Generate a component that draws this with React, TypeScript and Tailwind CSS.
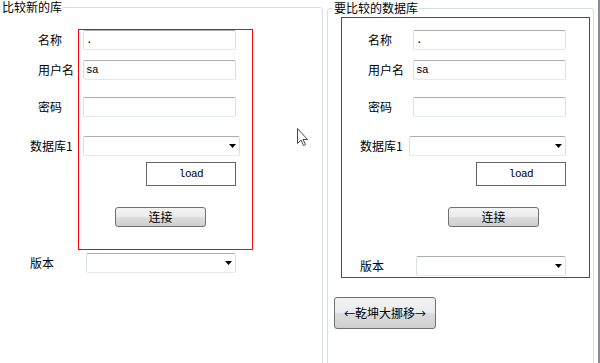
import React from "react";

const CJK = "font-[Noto_Sans_CJK_SC,sans-serif]";
const MONO = "font-[Liberation_Mono,monospace]";

function TextBox({ text = "", w = "w-[153px]" }: { text?: string; w?: string }) {
  return (
    <div
      className={`${w} h-[20px] shrink-0 bg-white border border-[#dbdfe6] border-t-[#abadb3] border-b-[#e3e9ef] rounded-[2px] pl-[2px] flex items-center text-[11px] tracking-[-0.5px] text-black ${MONO}`}
    >
      {text}
    </div>
  );
}

function ComboBox({ w = "w-[157px]" }: { w?: string }) {
  return (
    <div
      className={`${w} h-[20px] shrink-0 bg-white border border-[#dbdfe6] border-t-[#abadb3] border-b-[#e3e9ef] rounded-[2px] pr-[3px] flex items-center justify-end`}
    >
      <svg width="7" height="4" viewBox="0 0 7 4">
        <path d="M0 0H7L3.5 4Z" fill="#000" />
      </svg>
    </div>
  );
}

function LoadButton({ className = "" }: { className?: string }) {
  return (
    <div
      className={`w-[90px] h-[24px] bg-white border border-[#646464] flex items-center justify-center text-[11px] tracking-[-0.5px] text-black ${MONO} ${className}`}
    >
      load
    </div>
  );
}

function WinButton({ children, className = "" }: { children: React.ReactNode; className?: string }) {
  return (
    <div
      className={`border border-[#707070] rounded-[3px] bg-[linear-gradient(#f2f2f2_0%,#ebebeb_50%,#dddddd_50%,#cfcfcf_100%)] flex items-center justify-center text-[12px] text-black ${CJK} ${className}`}
    >
      {children}
    </div>
  );
}

function Label({ children, className = "" }: { children: React.ReactNode; className?: string }) {
  return <div className={`shrink-0 text-[12px] leading-[14px] text-black ${CJK} ${className}`}>{children}</div>;
}

export default function App() {
  return (
    <div className="relative w-[600px] h-[363px] overflow-hidden bg-white flex items-start">
      {/* Left group box */}
      <fieldset className="ml-[-4px] w-[327px] h-[420px] shrink-0 border border-[#d5dfe5] rounded-[3px] p-0 m-0">
        <legend className={`ml-[4px] px-[1px] text-[12px] leading-[14px] text-black ${CJK}`}>比较新的库</legend>
        <div className="flex mt-[15px]">
          <div className="w-[81px] shrink-0 pt-[1px] flex flex-col">
            <div className="h-[20px] flex items-center">
              <Label className="pl-[41px]">名称</Label>
            </div>
            <div className="h-[20px] mt-[10px] flex items-center">
              <Label className="pl-[41px]">用户名</Label>
            </div>
            <div className="h-[20px] mt-[17px] flex items-center">
              <Label className="pl-[41px]">密码</Label>
            </div>
            <div className="h-[20px] mt-[19px] flex items-center">
              <Label className="pl-[33px]">数据库1</Label>
            </div>
          </div>
          <div className="w-[175px] shrink-0 border border-[#ff0000] pl-[4px] pb-[22px] flex flex-col items-start">
            <TextBox text="." />
            <div className="mt-[10px]">
              <TextBox text="sa" />
            </div>
            <div className="mt-[17px]">
              <TextBox />
            </div>
            <div className="mt-[19px]">
              <ComboBox />
            </div>
            <LoadButton className="mt-[6px] ml-[63px]" />
            <WinButton className="mt-[21px] ml-[32px] w-[91px] h-[20px]">连接</WinButton>
          </div>
        </div>
        <div className="flex items-center mt-[3px]">
          <div className="w-[89px] shrink-0">
            <Label className="pl-[33px]">版本</Label>
          </div>
          <ComboBox w="w-[150px]" />
        </div>
      </fieldset>

      {/* Right group box */}
      <fieldset className="ml-[4px] mt-[1px] w-[267px] h-[420px] shrink-0 border border-[#d5dfe5] rounded-[3px] p-0">
        <legend className={`ml-[5px] px-[1px] text-[12px] leading-[14px] text-black ${CJK}`}>要比较的数据库</legend>
        <div className="ml-[13px] mt-[2px] w-[249px] border border-[#ff0000] pt-[12px] pb-[1px] flex flex-col items-start">
          <div className="flex items-center">
            <div className="w-[71px] shrink-0">
              <Label className="pl-[26px]">名称</Label>
            </div>
            <TextBox text="." />
          </div>
          <div className="flex items-center mt-[10px]">
            <div className="w-[71px] shrink-0">
              <Label className="pl-[26px]">用户名</Label>
            </div>
            <TextBox text="sa" />
          </div>
          <div className="flex items-center mt-[17px]">
            <div className="w-[71px] shrink-0">
              <Label className="pl-[26px]">密码</Label>
            </div>
            <TextBox />
          </div>
          <div className="flex items-center mt-[19px]">
            <div className="w-[67px] shrink-0">
              <Label className="pl-[18px]">数据库1</Label>
            </div>
            <ComboBox />
          </div>
          <LoadButton className="mt-[6px] ml-[134px]" />
          <WinButton className="mt-[21px] ml-[106px] w-[91px] h-[20px]">连接</WinButton>
          <div className="flex items-center mt-[29px]">
            <div className="w-[74px] shrink-0">
              <Label className="pl-[18px]">版本</Label>
            </div>
            <ComboBox w="w-[150px]" />
          </div>
        </div>
        <WinButton className="mt-[19px] ml-[6px] w-[102px] h-[32px]">
          <span className="text-[11px]">←</span>
          <span>乾坤大挪移</span>
          <span className="text-[11px]">→</span>
        </WinButton>
      </fieldset>

      <div className="ml-auto w-[2px] h-[363px] bg-[#8c8c94] shrink-0" />

      {/* mouse cursor */}
      <svg className="absolute left-[297px] top-[128px]" width="13" height="20" viewBox="0 0 13 20">
        <path
          d="M0.5 0.5 L0.5 15.5 L4 12 L6.5 17.5 L8.5 16.5 L6 11.5 L10.5 11.5 Z"
          fill="#fff"
          stroke="#4a4a4a"
          strokeWidth="1"
          strokeLinejoin="round"
        />
      </svg>
    </div>
  );
}
